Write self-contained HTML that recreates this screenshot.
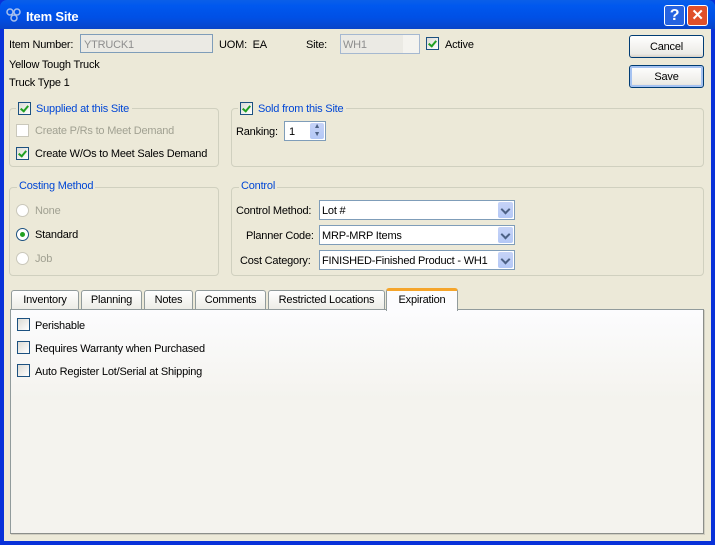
<!DOCTYPE html>
<html><head><meta charset="utf-8"><style>
*{box-sizing:border-box;margin:0;padding:0}
body{width:715px;height:545px;overflow:hidden;font-family:"Liberation Sans",sans-serif;font-size:11px;letter-spacing:-0.2px;color:#000;background:#0831d9;position:relative}
.a{position:absolute}
.t{position:absolute;white-space:nowrap;line-height:13px;margin-top:1px}
#frame{left:4px;top:29px;width:707px;height:512px;background:#ece9d8}
#title{left:0;top:0;width:715px;height:29px;background:linear-gradient(#0a5fe8,#0058ee 20%,#0050e6 60%,#0843c8);border-radius:7px 7px 0 0}
.cb{position:absolute;width:13px;height:13px;border:1px solid #1c5180;background:linear-gradient(135deg,#dcdbd5,#fff)}
.cb.dis{border-color:#cac8bb;background:#fff}
.chk::after{content:"";position:absolute;left:3px;top:1px;width:3px;height:6px;border:solid #21a121;border-width:0 2px 2px 0;transform:rotate(40deg)}
.grp{position:absolute;border:1px solid #d0d0bf;border-radius:4px}
.gt{position:absolute;background:#ece9d8;color:#0046d5;padding:0 2px;line-height:13px;white-space:nowrap}
.combo{position:absolute;background:#fff;border:1px solid #7f9db9;height:20px}
.combo .v{position:absolute;left:2px;top:4px;white-space:nowrap}
.arr{position:absolute;right:1px;top:1px;width:15px;height:16px;background:linear-gradient(#c6d3f7,#b4c8f6);border-radius:2px}
.arr::after{content:"";position:absolute;left:4px;top:4px;width:5px;height:5px;border:solid #4d6185;border-width:0 2px 2px 0;transform:rotate(45deg)}
.btn{position:absolute;width:75px;height:23px;border:1px solid #003c74;border-radius:3px;background:linear-gradient(#fff,#ecebe6 85%,#d6d0c5);text-align:center;line-height:22px}
.rad{position:absolute;width:13px;height:13px;border-radius:50%;border:1px solid #cac8bb;background:#fff}
.tab{position:absolute;top:290px;height:20px;border:1px solid #919b9c;border-bottom:none;border-radius:3px 3px 0 0;background:linear-gradient(#fff,#ecebe5);text-align:center;line-height:19px}
</style></head><body>
<div class="a" id="title"></div>
<div class="a" id="frame"></div>
<svg class="a" style="left:6px;top:8px" width="16" height="14"><circle cx="4" cy="4" r="3" fill="none" stroke="#a8c0ec" stroke-width="1.5"/><circle cx="11" cy="4" r="3" fill="none" stroke="#a8c0ec" stroke-width="1.5"/><circle cx="8" cy="10" r="3" fill="none" stroke="#a8c0ec" stroke-width="1.5"/></svg>
<div class="t" style="left:26px;top:8px;color:#fff;font-weight:bold;font-size:13px;line-height:16px">Item Site</div>
<div class="a" style="left:664px;top:5px;width:21px;height:21px;border:1px solid #fff;border-radius:3px;background:#2663e0;color:#fff;font-weight:bold;font-size:16px;text-align:center;line-height:19px">?</div>
<div class="a" style="left:687px;top:5px;width:21px;height:21px;border:1px solid #fff;border-radius:3px;background:#e0502a;color:#fff;font-weight:bold;font-size:15px;text-align:center;line-height:19px">✕</div>

<div class="t" style="left:9px;top:38px">Item Number:</div>
<div class="a" style="left:80px;top:34px;width:133px;height:19px;border:1px solid #7f9db9;background:#ebeae4"></div>
<div class="t" style="left:84px;top:38px;color:#8e8e8e">YTRUCK1</div>
<div class="t" style="left:219px;top:38px">UOM:&nbsp; EA</div>
<div class="t" style="left:306px;top:38px">Site:</div>
<div class="a" style="left:340px;top:34px;width:80px;height:20px;border:1px solid #a5b8d0;background:#ebeae4"></div>
<div class="t" style="left:343px;top:38px;color:#8e8e8e">WH1</div>
<div class="a" style="left:403px;top:35px;width:16px;height:18px;background:#f4f3ee"></div>
<div class="cb chk" style="left:426px;top:37px"></div>
<div class="t" style="left:445px;top:38px">Active</div>
<div class="btn" style="left:629px;top:35px">Cancel</div>
<div class="btn" style="left:629px;top:65px;box-shadow:inset 0 0 0 2px #a5c2f1">Save</div>
<div class="t" style="left:9px;top:58px">Yellow Tough Truck</div>
<div class="t" style="left:9px;top:76px">Truck Type 1</div>

<div class="grp" style="left:9px;top:108px;width:210px;height:59px"></div>
<div class="gt" style="left:16px;top:101px;width:116px;height:14px"></div>
<div class="cb chk" style="left:18px;top:102px"></div>
<div class="t" style="left:36px;top:102px;color:#0046d5">Supplied at this Site</div>
<div class="cb dis" style="left:16px;top:124px"></div>
<div class="t" style="left:35px;top:124px;color:#a1a192">Create P/Rs to Meet Demand</div>
<div class="cb chk" style="left:16px;top:147px"></div>
<div class="t" style="left:35px;top:147px">Create W/Os to Meet Sales Demand</div>

<div class="grp" style="left:231px;top:108px;width:473px;height:59px"></div>
<div class="gt" style="left:238px;top:101px;width:108px;height:14px"></div>
<div class="cb chk" style="left:240px;top:102px"></div>
<div class="t" style="left:258px;top:102px;color:#0046d5">Sold from this Site</div>
<div class="t" style="left:236px;top:125px">Ranking:</div>
<div class="a" style="left:284px;top:121px;width:42px;height:20px;border:1px solid #7f9db9;background:#fff"></div>
<div class="t" style="left:289px;top:125px">1</div>
<div class="a" style="left:310px;top:123px;width:14px;height:16px;background:linear-gradient(#c6d3f7,#b4c8f6);border-radius:2px;color:#4d6185;font-size:7px;line-height:8px;text-align:center">▲<br>▼</div>

<div class="grp" style="left:9px;top:187px;width:210px;height:89px"></div>
<div class="gt" style="left:17px;top:180px">Costing Method</div>
<div class="rad" style="left:16px;top:204px"></div><div class="t" style="left:35px;top:204px;color:#a1a192">None</div>
<div class="rad" style="left:16px;top:228px;border-color:#1c5180"><div class="a" style="left:3px;top:3px;width:5px;height:5px;border-radius:50%;background:#21a121"></div></div><div class="t" style="left:35px;top:228px">Standard</div>
<div class="rad" style="left:16px;top:252px"></div><div class="t" style="left:35px;top:252px;color:#a1a192">Job</div>

<div class="grp" style="left:231px;top:187px;width:473px;height:89px"></div>
<div class="gt" style="left:239px;top:180px">Control</div>
<div class="t" style="left:236px;top:204px">Control Method:</div>
<div class="t" style="left:246px;top:229px">Planner Code:</div>
<div class="t" style="left:240px;top:254px">Cost Category:</div>
<div class="combo" style="left:319px;top:200px;width:196px"><div class="v">Lot #</div><div class="arr"></div></div>
<div class="combo" style="left:319px;top:225px;width:196px"><div class="v">MRP-MRP Items</div><div class="arr"></div></div>
<div class="combo" style="left:319px;top:250px;width:196px"><div class="v">FINISHED-Finished Product - WH1</div><div class="arr"></div></div>

<div class="tab" style="left:11px;width:68px">Inventory</div>
<div class="tab" style="left:81px;width:61px">Planning</div>
<div class="tab" style="left:144px;width:49px">Notes</div>
<div class="tab" style="left:195px;width:71px">Comments</div>
<div class="tab" style="left:268px;width:117px">Restricted Locations</div>
<div class="a" style="left:10px;top:309px;width:694px;height:225px;border:1px solid #919b9c;border-right-color:#8b8e8a;border-bottom-color:#8b8e8a;background:linear-gradient(#fcfcfe,#f4f3ee 40%);box-shadow:1px 1px 0 #d0cec1"></div>
<div class="a" style="left:386px;top:288px;width:72px;height:23px;border:1px solid #919b9c;border-bottom:none;border-top:3px solid #f5a52b;border-radius:3px 3px 0 0;background:#fcfcfe;text-align:center;line-height:19px">Expiration</div>
<div class="cb" style="left:17px;top:318px"></div><div class="t" style="left:35px;top:319px">Perishable</div>
<div class="cb" style="left:17px;top:341px"></div><div class="t" style="left:35px;top:342px">Requires Warranty when Purchased</div>
<div class="cb" style="left:17px;top:364px"></div><div class="t" style="left:35px;top:365px">Auto Register Lot/Serial at Shipping</div>
</body></html>
